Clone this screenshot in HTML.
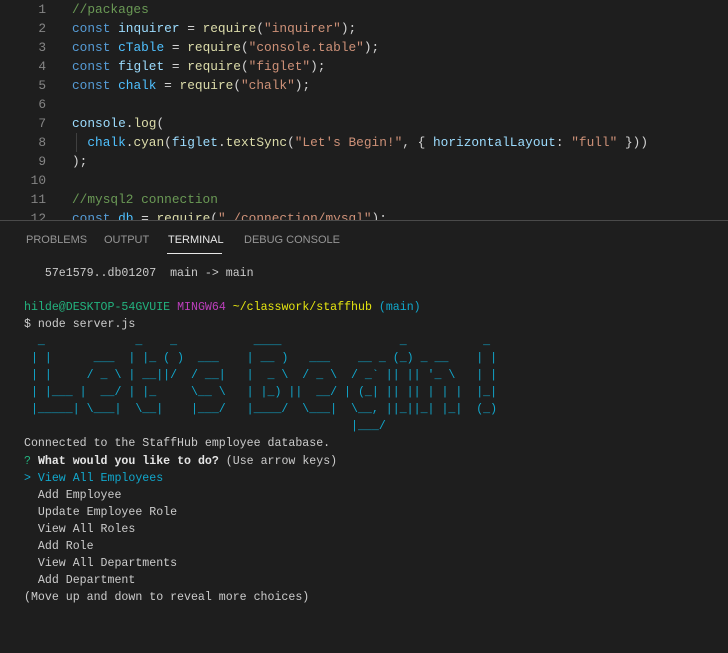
<!DOCTYPE html>
<html><head><style>
*{margin:0;padding:0}
body{width:728px;height:653px;background:#1e1e1e;overflow:hidden;position:relative;font-family:"Liberation Mono",monospace}
#ed{position:absolute;left:0;top:0;width:728px;height:220px;overflow:hidden}
.ln{position:absolute;left:0;width:46px;text-align:right;color:#858585;font-size:12.8px;line-height:19px}
.code{position:absolute;left:72px;font-size:12.8px;line-height:19px;color:#d4d4d4;white-space:pre}
.k{color:#569cd6}.v{color:#9cdcfe}.f{color:#dcdcaa}.s{color:#ce9178}.c{color:#6a9955}.cn{color:#4fc1ff}
#div{position:absolute;left:0;top:220px;width:728px;height:1px;background:#4a4a4a}
.tab{position:absolute;top:234px;font-family:"Liberation Sans",sans-serif;font-size:11px;color:#969696}
#ul{position:absolute;left:167px;top:253px;width:55px;height:1px;background:#e7e7e7}
#term{position:absolute;left:24px;top:265px;font-size:11.6px;line-height:17.05px;color:#cccccc;white-space:pre}
.g{color:#23b37f}.m{color:#bc3fbc}.y{color:#e5e510}.cy{color:#11a8cd}.b{font-weight:bold;color:#e5e5e5}
</style></head><body>
<div id="ed">
<div class="ln" style="top:0">1<br>2<br>3<br>4<br>5<br>6<br>7<br>8<br>9<br>10<br>11<br>12</div>
<div style="position:absolute;left:76px;top:133px;width:1px;height:19px;background:#404040"></div>
<div class="code" style="top:0"><span class="c">//packages</span>
<span class="k">const</span> <span class="v">inquirer</span> = <span class="f">require</span>(<span class="s">"inquirer"</span>);
<span class="k">const</span> <span class="cn">cTable</span> = <span class="f">require</span>(<span class="s">"console.table"</span>);
<span class="k">const</span> <span class="v">figlet</span> = <span class="f">require</span>(<span class="s">"figlet"</span>);
<span class="k">const</span> <span class="cn">chalk</span> = <span class="f">require</span>(<span class="s">"chalk"</span>);

<span class="v">console</span>.<span class="f">log</span>(
  <span class="cn">chalk</span>.<span class="f">cyan</span>(<span class="v">figlet</span>.<span class="f">textSync</span>(<span class="s">"Let's Begin!"</span>, { <span class="v">horizontalLayout</span>: <span class="s">"full"</span> }))
);

<span class="c">//mysql2 connection</span>
<span class="k">const</span> <span class="cn">db</span> = <span class="f">require</span>(<span class="s">"./connection/mysql"</span>);</div>
</div>
<div id="div"></div>
<div class="tab" style="left:26px">PROBLEMS</div>
<div class="tab" style="left:104px">OUTPUT</div>
<div class="tab" style="left:168px;color:#e7e7e7">TERMINAL</div>
<div class="tab" style="left:244px">DEBUG CONSOLE</div>
<div id="ul"></div>
<div id="term">   57e1579..db01207  main -&gt; main

<span class="g">hilde@DESKTOP-54GVUIE</span> <span class="m">MINGW64</span> <span class="y">~/classwork/staffhub</span> <span class="cy">(main)</span>
$ node server.js
<span class="cy">  _             _    _           ____                 _           _
 | |      ___  | |_ ( )  ___    | __ )   ___    __ _ (_) _ __    | |
 | |     / _ \ | __||/  / __|   |  _ \  / _ \  / _` || || '_ \   | |
 | |___ |  __/ | |_     \__ \   | |_) ||  __/ | (_| || || | | |  |_|
 |_____| \___|  \__|    |___/   |____/  \___|  \__, ||_||_| |_|  (_)
                                               |___/</span>
Connected to the StaffHub employee database.
<span class="g">?</span> <span class="b">What would you like to do?</span> (Use arrow keys)
<span class="cy">&gt; View All Employees</span>
  Add Employee
  Update Employee Role
  View All Roles
  Add Role
  View All Departments
  Add Department
(Move up and down to reveal more choices)</div>
</body></html>
